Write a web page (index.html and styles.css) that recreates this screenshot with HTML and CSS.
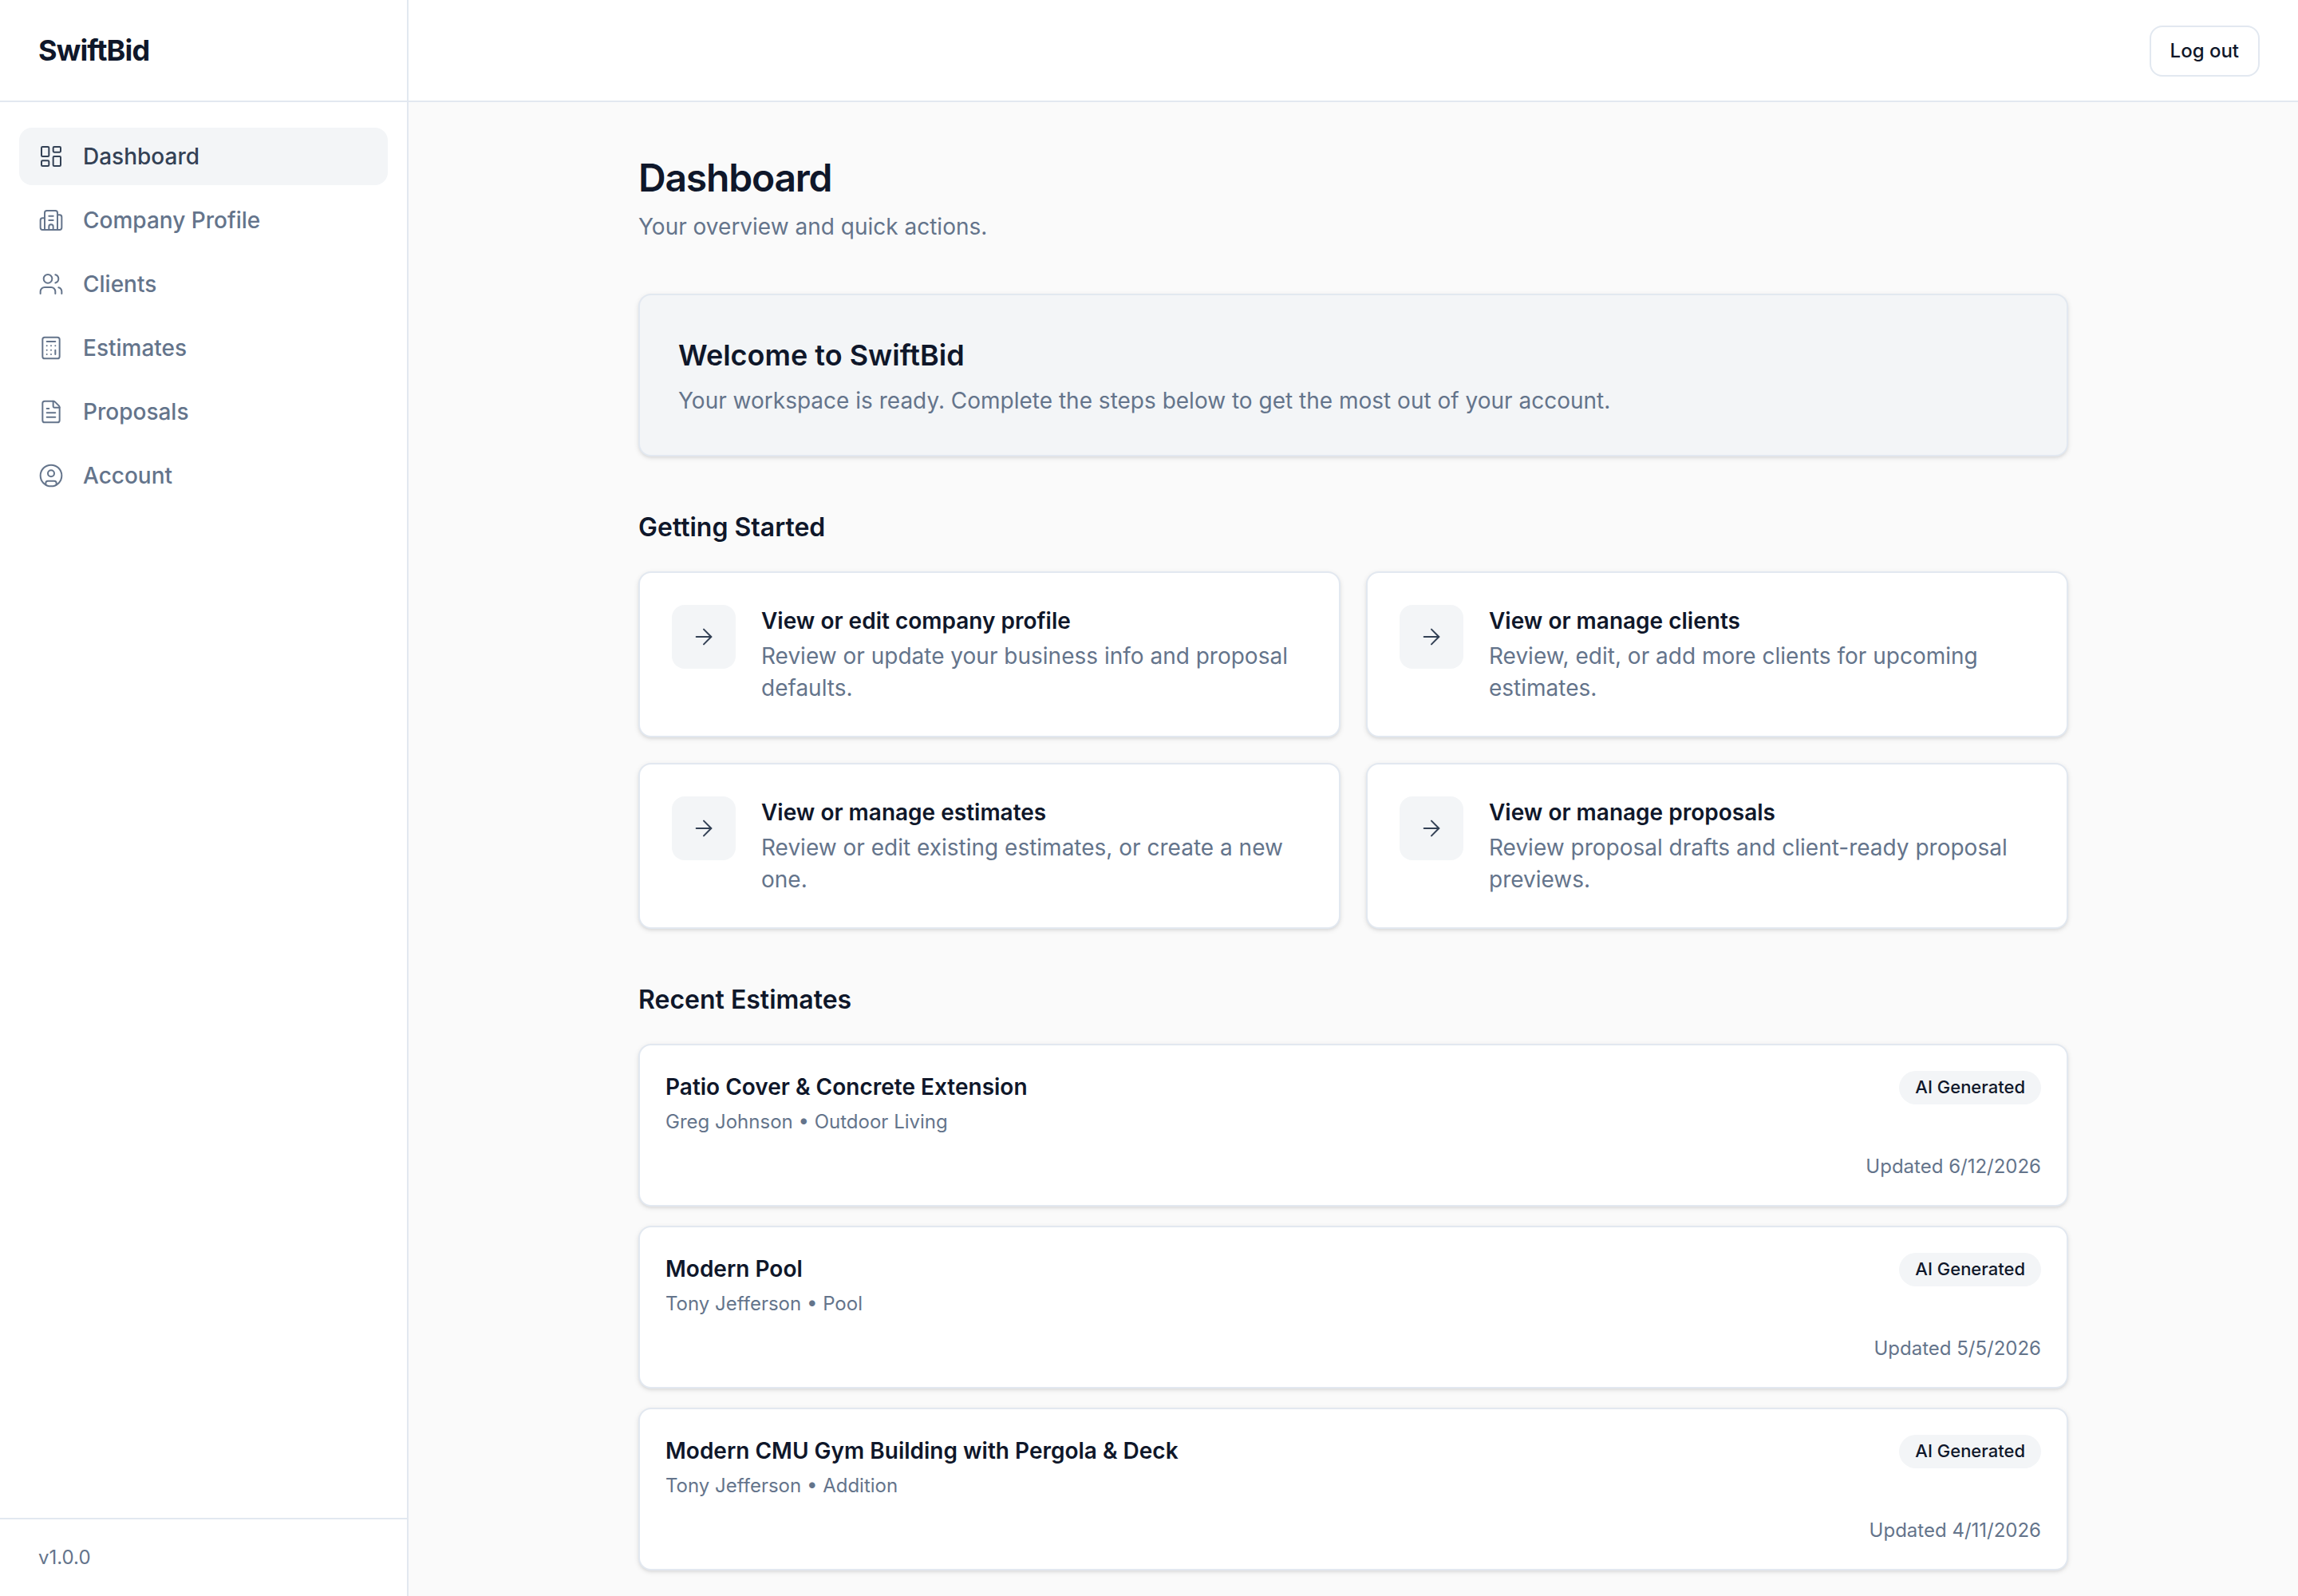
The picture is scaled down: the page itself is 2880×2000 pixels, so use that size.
FILE: index.html
```html
<!DOCTYPE html>
<html lang="en">
<head>
    <meta charset="UTF-8">
    <meta name="viewport" content="width=device-width, initial-scale=1.0">
    <title>SwiftBid</title>
    <link rel="stylesheet" href="styles.css">
</head>
<body>
    <aside class="sidebar">
        <div class="brand">SwiftBid</div>
        <nav class="nav">
            <a class="nav-item active" href="#">
                <svg class="icon" viewBox="0 0 24 24"><rect width="7" height="9" x="3" y="3" rx="1"/><rect width="7" height="5" x="14" y="3" rx="1"/><rect width="7" height="9" x="14" y="12" rx="1"/><rect width="7" height="5" x="3" y="16" rx="1"/></svg>
                <span>Dashboard</span>
            </a>
            <a class="nav-item" href="#">
                <svg class="icon" viewBox="0 0 24 24"><path d="M10 12h4"/><path d="M10 8h4"/><path d="M14 21v-3a2 2 0 0 0-4 0v3"/><path d="M6 10H4a2 2 0 0 0-2 2v7a2 2 0 0 0 2 2h16a2 2 0 0 0 2-2V9a2 2 0 0 0-2-2h-2"/><path d="M6 21V5a2 2 0 0 1 2-2h8a2 2 0 0 1 2 2v16"/></svg>
                <span>Company Profile</span>
            </a>
            <a class="nav-item" href="#">
                <svg class="icon" viewBox="0 0 24 24"><path d="M16 21v-2a4 4 0 0 0-4-4H6a4 4 0 0 0-4 4v2"/><path d="M16 3.128a4 4 0 0 1 0 7.744"/><path d="M22 21v-2a4 4 0 0 0-3-3.87"/><circle cx="9" cy="7" r="4"/></svg>
                <span>Clients</span>
            </a>
            <a class="nav-item" href="#">
                <svg class="icon" viewBox="0 0 24 24"><rect width="16" height="20" x="4" y="2" rx="2"/><path d="M8 6h8"/><path d="M16 14v4"/><path d="M16 10h.01"/><path d="M12 10h.01"/><path d="M8 10h.01"/><path d="M12 14h.01"/><path d="M8 14h.01"/><path d="M12 18h.01"/><path d="M8 18h.01"/></svg>
                <span>Estimates</span>
            </a>
            <a class="nav-item" href="#">
                <svg class="icon" viewBox="0 0 24 24"><path d="M6 22a2 2 0 0 1-2-2V4a2 2 0 0 1 2-2h8a2.4 2.4 0 0 1 1.704.706l3.588 3.588A2.4 2.4 0 0 1 20 8v12a2 2 0 0 1-2 2z"/><path d="M14 2v5a1 1 0 0 0 1 1h5"/><path d="M10 9H8"/><path d="M16 13H8"/><path d="M16 17H8"/></svg>
                <span>Proposals</span>
            </a>
            <a class="nav-item" href="#">
                <svg class="icon" viewBox="0 0 24 24"><circle cx="12" cy="12" r="10"/><circle cx="12" cy="10" r="3"/><path d="M7 20.662V19a2 2 0 0 1 2-2h6a2 2 0 0 1 2 2v1.662"/></svg>
                <span>Account</span>
            </a>
        </nav>
        <div class="version">v1.0.0</div>
    </aside>

    <div class="page">
        <header class="topbar">
            <button class="logout">Log out</button>
        </header>

        <main class="content">
            <h1>Dashboard</h1>
            <p class="subtitle">Your overview and quick actions.</p>

            <section class="card welcome">
                <h2>Welcome to SwiftBid</h2>
                <p>Your workspace is ready. Complete the steps below to get the most out of your account.</p>
            </section>

            <section class="section">
                <h3>Getting Started</h3>
                <div class="actions">
                    <a class="card action" href="#">
                        <div class="action-icon"><svg class="icon" viewBox="0 0 24 24"><path d="M5 12h14"/><path d="m12 5 7 7-7 7"/></svg></div>
                        <div class="action-text">
                            <h4>View or edit company profile</h4>
                            <p>Review or update your business info and proposal defaults.</p>
                        </div>
                    </a>
                    <a class="card action" href="#">
                        <div class="action-icon"><svg class="icon" viewBox="0 0 24 24"><path d="M5 12h14"/><path d="m12 5 7 7-7 7"/></svg></div>
                        <div class="action-text">
                            <h4>View or manage clients</h4>
                            <p>Review, edit, or add more clients for upcoming estimates.</p>
                        </div>
                    </a>
                    <a class="card action" href="#">
                        <div class="action-icon"><svg class="icon" viewBox="0 0 24 24"><path d="M5 12h14"/><path d="m12 5 7 7-7 7"/></svg></div>
                        <div class="action-text">
                            <h4>View or manage estimates</h4>
                            <p>Review or edit existing estimates, or create a new one.</p>
                        </div>
                    </a>
                    <a class="card action" href="#">
                        <div class="action-icon"><svg class="icon" viewBox="0 0 24 24"><path d="M5 12h14"/><path d="m12 5 7 7-7 7"/></svg></div>
                        <div class="action-text">
                            <h4>View or manage proposals</h4>
                            <p>Review proposal drafts and client-ready proposal previews.</p>
                        </div>
                    </a>
                </div>
            </section>

            <section class="section">
                <h3>Recent Estimates</h3>
                <div class="estimates">
                    <a class="card estimate" href="#">
                        <div class="estimate-top">
                            <div>
                                <h4>Patio Cover &amp; Concrete Extension</h4>
                                <p class="client">Greg Johnson • Outdoor Living</p>
                            </div>
                            <span class="badge">AI Generated</span>
                        </div>
                        <p class="updated">Updated 6/12/2026</p>
                    </a>
                    <a class="card estimate" href="#">
                        <div class="estimate-top">
                            <div>
                                <h4>Modern Pool</h4>
                                <p class="client">Tony Jefferson • Pool</p>
                            </div>
                            <span class="badge">AI Generated</span>
                        </div>
                        <p class="updated">Updated 5/5/2026</p>
                    </a>
                    <a class="card estimate" href="#">
                        <div class="estimate-top">
                            <div>
                                <h4>Modern CMU Gym Building with Pergola &amp; Deck</h4>
                                <p class="client">Tony Jefferson • Addition</p>
                            </div>
                            <span class="badge">AI Generated</span>
                        </div>
                        <p class="updated">Updated 4/11/2026</p>
                    </a>
                </div>
            </section>
        </main>
    </div>
</body>
</html>
```
FILE: styles.css
```css
* {
    box-sizing: border-box;
    margin: 0;
    padding: 0;
}

body {
    display: flex;
    height: 100vh;
    overflow: hidden;
    background-color: #fafafa;
    color: #0f172a;
    font-family: 'Inter', Arial, sans-serif;
    font-size: 28px;
    line-height: 40px;
    -webkit-font-smoothing: antialiased;
}

a {
    color: inherit;
    text-decoration: none;
}

.icon {
    display: block;
    flex-shrink: 0;
    width: 32px;
    height: 32px;
    fill: none;
    stroke: currentColor;
    stroke-width: 1.5;
    stroke-linecap: round;
    stroke-linejoin: round;
}

/* Sidebar */
.sidebar {
    display: flex;
    flex-direction: column;
    flex-shrink: 0;
    width: 512px;
    background-color: #fff;
    border-right: 2px solid #e2e8f0;
}

.brand {
    display: flex;
    align-items: center;
    height: 128px;
    padding: 0 48px;
    border-bottom: 2px solid #e2e8f0;
    font-size: 36px;
    font-weight: 700;
    letter-spacing: -0.025em;
}

.nav {
    display: flex;
    flex: 1;
    flex-direction: column;
    gap: 8px;
    padding: 32px 24px;
}

.nav-item {
    display: flex;
    align-items: center;
    gap: 24px;
    height: 72px;
    padding: 0 24px;
    border-radius: 16px;
    color: #64748b;
    font-weight: 500;
}

.nav-item.active {
    background-color: #f3f5f7;
    color: #334155;
}

.version {
    padding: 32px 48px;
    border-top: 2px solid #e2e8f0;
    color: #64748b;
    font-size: 24px;
    line-height: 32px;
}

/* Page */
.page {
    display: flex;
    flex: 1;
    flex-direction: column;
}

.topbar {
    display: flex;
    align-items: flex-start;
    justify-content: flex-end;
    flex-shrink: 0;
    height: 128px;
    padding: 32px 48px 0;
    background-color: #fff;
    border-bottom: 2px solid #e2e8f0;
}

.logout {
    height: 64px;
    padding: 0 24px 2px;
    background-color: #fff;
    border: 2px solid #e2e8f0;
    border-radius: 16px;
    color: #0f172a;
    font-family: inherit;
    font-size: 24px;
    font-weight: 500;
}

.content {
    width: 1792px;
    margin: 0 auto;
    padding-top: 64px;
}

h1 {
    font-size: 48px;
    font-weight: 600;
    line-height: 62px;
    letter-spacing: -0.025em;
}

.subtitle {
    margin-top: 10px;
    color: #64748b;
}

.card {
    background-color: #fff;
    border: 2px solid #e2e8f0;
    border-radius: 16px;
    box-shadow: 0 2px 6px rgba(0, 0, 0, 0.1), 0 2px 4px -2px rgba(0, 0, 0, 0.1);
}

.card p {
    color: #64748b;
}

.welcome {
    margin-top: 64px;
    padding: 48px;
    background-color: #f3f5f7;
}

.welcome h2 {
    margin-bottom: 10px;
    font-size: 36px;
    font-weight: 600;
    line-height: 54px;
}

.section {
    margin-top: 64px;
}

.section h3 {
    margin-bottom: 30px;
    font-size: 32px;
    font-weight: 600;
    line-height: 50px;
}

h4 {
    font-size: 28px;
    font-weight: 600;
}

/* Getting started */
.actions {
    display: grid;
    grid-template-columns: 1fr 1fr;
    gap: 32px;
}

.action {
    display: flex;
    align-items: flex-start;
    gap: 32px;
    padding: 40px;
}

.action-icon {
    display: flex;
    align-items: center;
    justify-content: center;
    flex-shrink: 0;
    width: 80px;
    height: 80px;
    background-color: #f3f5f7;
    border-radius: 16px;
    color: #334155;
}

.action-text p {
    margin-top: 4px;
}

/* Recent estimates */
.estimates {
    display: flex;
    flex-direction: column;
    gap: 24px;
}

.estimate {
    padding: 32px;
}

.estimate-top {
    display: flex;
    align-items: flex-start;
    justify-content: space-between;
}

.estimate .client {
    margin-top: 8px;
    font-size: 24px;
    line-height: 32px;
}

.badge {
    padding: 3px 20px 5px;
    background-color: #f3f5f7;
    border-radius: 999px;
    font-size: 22px;
    font-weight: 500;
    line-height: 34px;
}

.estimate .updated {
    margin-top: 24px;
    font-size: 24px;
    line-height: 32px;
    text-align: right;
}
```
